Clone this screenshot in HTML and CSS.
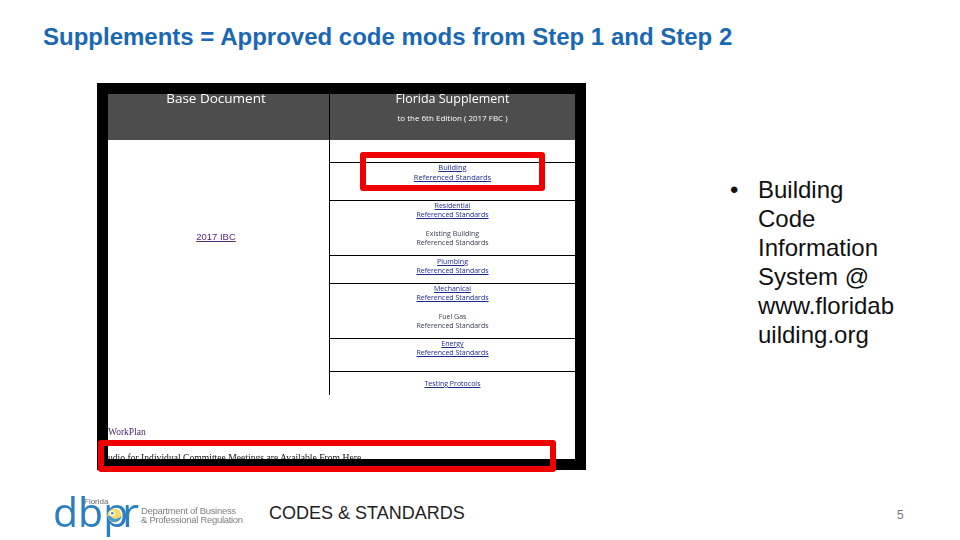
FILE: index.html
```html
<!DOCTYPE html>
<html lang="en">
<head>
<meta charset="utf-8">
<title>Supplements</title>
<link rel="stylesheet" href="styles.css">
</head>
<body>
<main class="slide">
  <h1 class="title">Supplements = Approved code mods from Step 1 and Step 2</h1>
  <div class="middle">
    <figure class="shot">
      <div class="page">
        <div class="table">
          <div class="col-base">
            <div class="head base-head">Base Document</div>
            <div class="base-body"><a class="link visited">2017 IBC</a></div>
          </div>
          <div class="col-sup">
            <div class="head sup-head">
              <div>Florida Supplement</div>
              <div class="sub">to the 6th Edition ( 2017 FBC )</div>
            </div>
            <div class="row r0"></div>
            <div class="row r1"><a class="link">Building<br>Referenced Standards</a></div>
            <div class="row r2">
              <a class="link">Residential<br>Referenced Standards</a>
              <span class="plain">Existing Building<br>Referenced Standards</span>
            </div>
            <div class="row r3"><a class="link">Plumbing<br>Referenced Standards</a></div>
            <div class="row r2">
              <a class="link">Mechanical<br>Referenced Standards</a>
              <span class="plain">Fuel Gas<br>Referenced Standards</span>
            </div>
            <div class="row r4"><a class="link">Energy<br>Referenced Standards</a></div>
            <div class="row r5"><a class="link">Testing Protocols</a></div>
          </div>
        </div>
        <div class="work">WorkPlan</div>
        <div class="audio">Audio for Individual Committee Meetings are Available From Here</div>
      </div>
      <div class="mark mark-top"></div>
      <div class="mark mark-bottom"></div>
    </figure>
    <ul class="bullets">
      <li>Building Code Information System @ www.floridab uilding.org</li>
    </ul>
  </div>
  <footer class="footer">
    <div class="logo">
      <span class="dbpr">db<span class="tight">p</span>r</span>
      <span class="florida">Florida</span>
      <svg class="sun" viewBox="0 0 20 20" aria-hidden="true">
        <circle cx="10" cy="10" r="9.5" fill="#f4d96a"/>
        <path d="M0.6 10 Q5 10 8 13.5 Q12 16.5 19.4 11 A9.5 9.5 0 0 1 0.6 10Z" fill="#3f9ad6"/>
        <circle cx="7" cy="7" r="3.4" fill="#fff"/>
        <circle cx="7" cy="7" r="1.8" fill="#4a86b8"/>
      </svg>
      <span class="dept">Department of Business<br>&amp; Professional Regulation</span>
    </div>
    <div class="division">CODES &amp; STANDARDS</div>
    <div class="num">5</div>
  </footer>
</main>
</body>
</html>
```
FILE: styles.css
```css
* { box-sizing: border-box; }
html, body { margin: 0; padding: 0; background: #fff; }
body { width: 960px; height: 540px; overflow: hidden; font-family: "Liberation Sans", Arial, sans-serif; }
.slide { width: 960px; height: 540px; display: flex; flex-direction: column; }
.title { margin: 0; padding: 23px 0 0 43px; height: 83px; font-size: 24px; line-height: 28px; font-weight: 700; color: #1a68b3; white-space: nowrap; }
.middle { display: flex; height: 387px; }
.shot { position: relative; margin: 0 0 0 97px; width: 489px; height: 387px; flex: none; border: 11px solid #000; background: #fff; }
.page { height: 365px; overflow: hidden; filter: blur(0.5px); }
.table { display: flex; height: 301px; }
.col-base { width: 221px; flex: none; }
.col-sup { flex: 1; border-left: 1px solid #000; }
.head { height: 46px; background: #4d4d4d; color: #fff; font-family: "Open Sans", sans-serif; font-size: 12.5px; line-height: 9px; text-align: center; }
.base-head { padding-right: 5px; font-size: 13.5px; line-height: 8px; }
.sub { font-size: 8px; line-height: 12px; margin-top: 9px; }
.base-body { height: 255px; display: flex; align-items: flex-end; justify-content: center; padding: 0 5px 153px 0; }
.row { border-bottom: 1px solid #000; text-align: center; font-family: "Open Sans", sans-serif; font-size: 7px; line-height: 9px; display: flex; flex-direction: column; align-items: center; }
.r0 { height: 23px; }
.r1 { height: 38px; line-height: 9.5px; font-size: 7.5px; }
.r2 { height: 55px; gap: 10px; }
.r3 { height: 28px; padding-top: 1px; }
.r4 { height: 33px; }
.r5 { height: 24px; border-bottom: 0; padding-top: 7px; }
.link { color: #1c2a8c; text-decoration: underline; }
.visited { color: #5a2a7c; font-size: 9.5px; line-height: 10px; }
.plain { color: #3a4050; }
.work { margin-top: 32px; font-family: "Liberation Serif", serif; font-size: 9.5px; line-height: 11px; color: #4a1a6a; }
.audio { margin-top: 14px; font-family: "Liberation Serif", serif; font-size: 9.65px; line-height: 11px; color: #111; white-space: nowrap; text-indent: -7px; }
.mark { position: absolute; border: 6px solid #f00000; border-radius: 3px; }
.mark-top { left: 252px; top: 58px; width: 185px; height: 39px; }
.mark-bottom { left: -10px; top: 346px; width: 458px; height: 32px; }
.bullets { list-style: none; margin: 0; padding: 92px 0 0 172px; width: 316px; font-size: 24px; line-height: 29px; color: #111; }
.bullets li { position: relative; }
.bullets li::before { content: "•"; position: absolute; left: -28px; }
.footer { display: flex; align-items: center; height: 70px; position: relative; }
.logo { position: relative; width: 269px; height: 70px; flex: none; color: #2a7fc0; filter: blur(0.4px); }
.florida { position: absolute; left: 84px; top: 27px; font-size: 8px; line-height: 9px; color: #666; }
.dbpr { position: absolute; left: 53px; top: 13px; font-family: "Open Sans", sans-serif; font-weight: 400; font-size: 41px; line-height: 56px; }
.tight { letter-spacing: -6px; }
.sun { position: absolute; left: 107px; top: 38px; width: 15px; height: 15px; }
.dept { position: absolute; left: 141px; top: 36px; font-size: 9.5px; line-height: 9px; color: #808080; letter-spacing: -0.3px; white-space: nowrap; }
.division { font-size: 18px; color: #222; margin-top: 16px; }
.num { position: absolute; left: 897px; top: 38px; font-size: 12px; color: #777; }
```
